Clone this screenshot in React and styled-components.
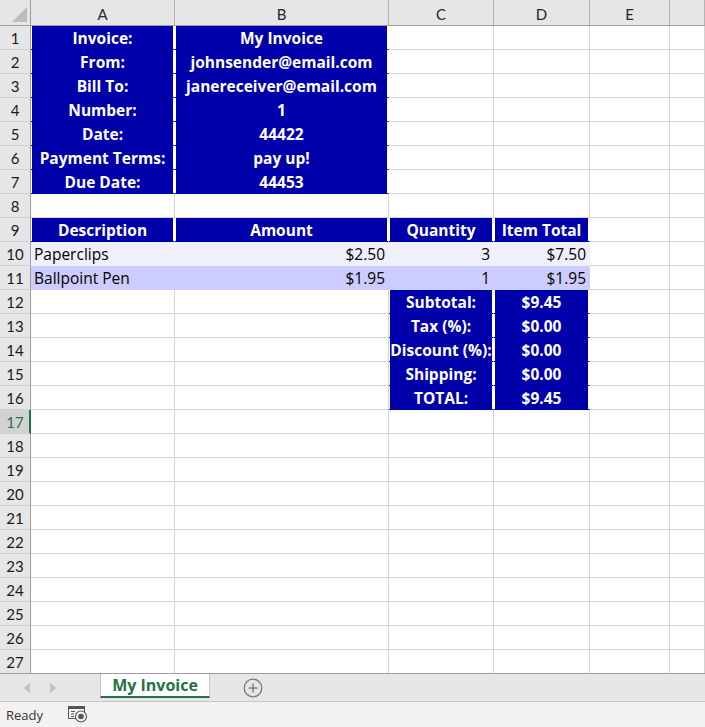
import React from 'react';
import styled, { createGlobalStyle, css } from 'styled-components';

const GlobalStyle = createGlobalStyle`
  html, body { margin: 0; padding: 0; background: #fff; }
  body { font-family: Lato, "Liberation Sans", sans-serif; overflow: hidden; }
`;

const BLUE = '#0000aa';
const FILLS = { blue: BLUE, pale: '#efeffe', lav: '#ccccfe' };

const COLS = ['A', 'B', 'C', 'D', 'E', 'F'];

const Page = styled.div`
  width: 705px;
  height: 727px;
  display: flex;
  flex-direction: column;
  overflow: hidden;
`;

const Grid = styled.div`
  display: grid;
  grid-template-columns: 31px 144px 214px 105px 96px 80px 1fr;
  grid-template-rows: 26px repeat(26, 24px) 23px;
`;

const Corner = styled.div`
  background: #e6e6e6;
  border-right: 1px solid #9e9e9e;
  border-bottom: 1px solid #9e9e9e;
  box-sizing: border-box;
  display: flex;
  align-items: flex-end;
  justify-content: flex-end;
  padding: 0 3px 3px 0;
`;

const CornerTri = styled.div`
  width: 0;
  height: 0;
  border-left: 15px solid transparent;
  border-bottom: 15px solid #bdbdbd;
`;

const ColHead = styled.div`
  background: #e6e6e6;
  border-right: 1px solid #b4b4b4;
  border-bottom: 1px solid #9e9e9e;
  box-sizing: border-box;
  display: flex;
  align-items: center;
  justify-content: center;
  font-size: 15px;
  color: #262626;
  padding-top: 2px;
`;

const RowHead = styled.div`
  background: ${p => (p.$active ? '#d2d2d2' : '#e6e6e6')};
  border-right: ${p => (p.$active ? '2px solid #217346' : '1px solid #9e9e9e')};
  border-bottom: ${p => (p.$last ? 'none' : '1px solid #cfcfcf')};
  box-sizing: border-box;
  display: flex;
  align-items: center;
  justify-content: center;
  font-size: 15px;
  color: ${p => (p.$active ? '#217346' : '#1a1a1a')};
  padding-left: ${p => (p.$active ? '1px' : '0')};
  padding-top: 1px;
`;

const Cell = styled.div`
  box-sizing: border-box;
  border-right: 1px solid #d4d4d4;
  border-bottom: ${p => (p.$last ? 'none' : '1px solid #d4d4d4')};
  display: flex;
  align-items: center;
  font-family: "Open Sans", Lato, sans-serif;
  font-size: 15.5px;
  color: #000;
  white-space: nowrap;
  overflow: visible;
  padding: 1px 3px 0 3px;
  justify-content: ${p => (p.$align === 'center' ? 'center' : p.$align === 'right' ? 'flex-end' : 'flex-start')};
  font-weight: ${p => (p.$bold ? 700 : 400)};
  ${p => p.$fill === 'blue' && css`
    background: ${BLUE};
    color: #fff;
    border-right-color: #fff;
    border-bottom-color: ${BLUE};
    box-shadow: inset 1px 0 0 #fff, inset -1px 0 0 #fff;
  `}
  ${p => (p.$fill === 'pale' || p.$fill === 'lav') && css`
    background: ${FILLS[p.$fill]};
    border-right-color: ${FILLS[p.$fill]};
    border-bottom-color: ${FILLS[p.$fill]};
  `}
`;

const TabBar = styled.div`
  height: 29px;
  box-sizing: border-box;
  background: #e6e6e6;
  border-top: 1px solid #9e9e9e;
  border-bottom: 1px solid #c6c6c6;
  display: flex;
  align-items: flex-start;
`;

const NavArrows = styled.div`
  width: 100px;
  height: 27px;
  display: flex;
  align-items: center;
  gap: 20px;
  padding-left: 24px;
  box-sizing: border-box;
`;

const Tab = styled.div`
  width: 110px;
  height: 24px;
  box-sizing: border-box;
  background: #fff;
  border-left: 1px solid #c6c6c6;
  border-right: 1px solid #c6c6c6;
  border-bottom: 2px solid #217346;
  color: #217346;
  font-family: "Open Sans", Lato, sans-serif;
  font-weight: 700;
  font-size: 16px;
  display: flex;
  align-items: center;
  justify-content: center;
  padding-bottom: 1px;
`;

const AddBtn = styled.div`
  margin-left: 33px;
  height: 27px;
  display: flex;
  align-items: center;
`;

const StatusBar = styled.div`
  flex: 1;
  background: #f3f2f1;
  display: flex;
  align-items: center;
  padding-left: 6px;
  gap: 25px;
  font-size: 13px;
  color: #333;
  font-family: "Segoe UI", "Open Sans", "Liberation Sans", sans-serif;
`;

const b = (t) => ({ t, fill: 'blue', align: 'center', bold: true });

const SHEET = {
  1: { A: b('Invoice:'), B: b('My Invoice') },
  2: { A: b('From:'), B: b('johnsender@email.com') },
  3: { A: b('Bill To:'), B: b('janereceiver@email.com') },
  4: { A: b('Number:'), B: b('1') },
  5: { A: b('Date:'), B: b('44422') },
  6: { A: b('Payment Terms:'), B: b('pay up!') },
  7: { A: b('Due Date:'), B: b('44453') },
  9: { A: b('Description'), B: b('Amount'), C: b('Quantity'), D: b('Item Total') },
  10: {
    A: { t: 'Paperclips', fill: 'pale', align: 'left' },
    B: { t: '$2.50', fill: 'pale', align: 'right' },
    C: { t: '3', fill: 'pale', align: 'right' },
    D: { t: '$7.50', fill: 'pale', align: 'right' },
  },
  11: {
    A: { t: 'Ballpoint Pen', fill: 'lav', align: 'left' },
    B: { t: '$1.95', fill: 'lav', align: 'right' },
    C: { t: '1', fill: 'lav', align: 'right' },
    D: { t: '$1.95', fill: 'lav', align: 'right' },
  },
  12: { C: b('Subtotal:'), D: b('$9.45') },
  13: { C: b('Tax (%):'), D: b('$0.00') },
  14: { C: b('Discount (%):'), D: b('$0.00') },
  15: { C: b('Shipping:'), D: b('$0.00') },
  16: { C: b('TOTAL:'), D: b('$9.45') },
};

const ROWS = Array.from({ length: 27 }, (_, i) => i + 1);

function Arrow({ dir }) {
  return (
    <svg width="6" height="10" viewBox="0 0 6 10">
      {dir === 'left'
        ? <polygon points="6,0 0,5 6,10" fill="#c2c2c2" />
        : <polygon points="0,0 6,5 0,10" fill="#c2c2c2" />}
    </svg>
  );
}

function PlusCircle() {
  return (
    <svg width="20" height="20" viewBox="0 0 20 20">
      <circle cx="10" cy="10" r="8.8" fill="none" stroke="#7a7a7a" strokeWidth="1.3" />
      <line x1="10" y1="5.5" x2="10" y2="14.5" stroke="#7a7a7a" strokeWidth="1.4" />
      <line x1="5.5" y1="10" x2="14.5" y2="10" stroke="#7a7a7a" strokeWidth="1.4" />
    </svg>
  );
}

function MacroIcon() {
  return (
    <svg width="20" height="17" viewBox="0 0 20 17">
      <rect x="0.5" y="0.5" width="16" height="12" fill="none" stroke="#555" strokeWidth="1" />
      <rect x="0.5" y="0.5" width="16" height="2.5" fill="#555" />
      <line x1="3" y1="5.5" x2="7" y2="5.5" stroke="#555" />
      <line x1="3" y1="8" x2="6" y2="8" stroke="#555" />
      <line x1="3" y1="10.5" x2="6" y2="10.5" stroke="#555" />
      <circle cx="13" cy="10.5" r="5.5" fill="#f3f2f1" stroke="#555" strokeWidth="1.1" />
      <circle cx="13" cy="10.5" r="2.8" fill="#555" />
    </svg>
  );
}

export default function App() {
  return (
    <Page>
      <GlobalStyle />
      <Grid>
        <Corner><CornerTri /></Corner>
        {COLS.map(c => <ColHead key={c}>{c === 'F' ? '' : c}</ColHead>)}
        {ROWS.map(r => (
          <React.Fragment key={r}>
            <RowHead $active={r === 17} $last={r === 27}>{r}</RowHead>
            {COLS.map(c => {
              const d = (SHEET[r] && SHEET[r][c]) || {};
              return (
                <Cell
                  key={c}
                  $fill={d.fill}
                  $align={d.align}
                  $bold={d.bold}
                  $last={r === 27}
                >
                  {d.t}
                </Cell>
              );
            })}
          </React.Fragment>
        ))}
      </Grid>
      <TabBar>
        <NavArrows>
          <Arrow dir="left" />
          <Arrow dir="right" />
        </NavArrows>
        <Tab>My Invoice</Tab>
        <AddBtn><PlusCircle /></AddBtn>
      </TabBar>
      <StatusBar>
        <span>Ready</span>
        <MacroIcon />
      </StatusBar>
    </Page>
  );
}
